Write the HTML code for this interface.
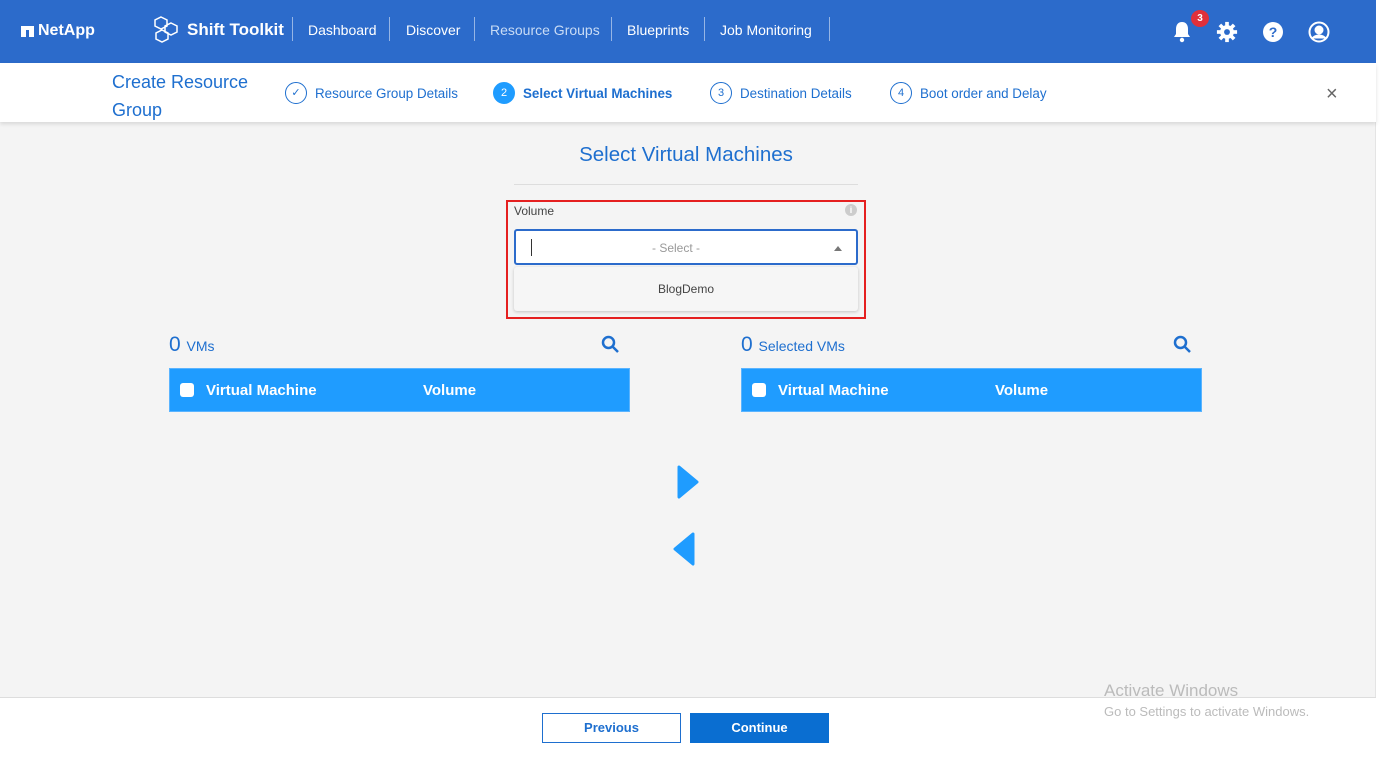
<!DOCTYPE html>
<html><head><style>
*{box-sizing:border-box;margin:0;padding:0}
body{width:1384px;height:760px;background:#fff;font-family:"Liberation Sans",sans-serif;position:relative;overflow:hidden}
.app{position:absolute;left:0;top:0;width:1376px;height:755px;background:#f4f4f4;border-right:1px solid #e4e4e4}
.hdr{position:absolute;left:0;top:0;width:1376px;height:63px;background:#2c6bcb;color:#fff}
.hdr .t{position:absolute;top:22px;font-size:14px}
.sep{position:absolute;top:17px;width:1px;height:24px;background:rgba(255,255,255,.5)}
.sub{position:absolute;left:0;top:63px;width:1376px;height:59px;background:#fff;box-shadow:0 2px 4px rgba(0,0,0,.12)}
.blue{color:#1e6fcf}
.step{position:absolute;top:23px;font-size:13.4px;color:#1e6fcf}
.circ{position:absolute;top:19px;width:22px;height:22px;border:1.3px solid #1e6fcf;border-radius:50%;font-size:11px;text-align:center;line-height:20px;color:#1e6fcf}
.tbl{position:absolute;top:368px;width:461px;height:44px;background:#1f9cff;color:#fff;font-weight:bold;font-size:15px;border:1px solid #5ab4ff}
.tbl span{position:absolute;top:13px}
.cb{position:absolute;left:10px;top:14px;width:14px;height:14px;background:#fff;border-radius:3px}
.foot{position:absolute;left:0;top:697px;width:1376px;height:58px;background:#fff;border-top:1px solid #ddd}
.btn{position:absolute;top:15px;width:139px;height:30px;font-size:13px;font-weight:bold;text-align:center;line-height:28px}
</style></head><body>
<div class="app">
<div class="hdr">
 <div style="position:absolute;left:21px;top:26px;width:13px;height:11px;background:#fff"></div>
 <div style="position:absolute;left:26px;top:30px;width:3px;height:7px;background:#2c6bcb"></div>
 <div class="t" style="left:38px;top:22px;font-weight:bold;font-size:16px">NetApp</div>
 <svg style="position:absolute;left:151px;top:14px" width="30" height="30" viewBox="0 0 30 30" fill="none" stroke="#fff" stroke-width="1.5"><path d="M10 3l6 3v6l-6 3-6-3V6z M20 9l6 3v6l-6 3-6-3v-6z M11 16l6 3v6l-6 3-6-3v-6z"/></svg>
 <div class="t" style="left:187px;top:20px;font-weight:bold;font-size:17px">Shift Toolkit</div>
 <div class="sep" style="left:292px"></div>
 <div class="t" style="left:308px">Dashboard</div>
 <div class="sep" style="left:389px"></div>
 <div class="t" style="left:406px">Discover</div>
 <div class="sep" style="left:474px"></div>
 <div class="t" style="left:490px;color:#c9dcf5">Resource Groups</div>
 <div class="sep" style="left:611px"></div>
 <div class="t" style="left:627px">Blueprints</div>
 <div class="sep" style="left:704px"></div>
 <div class="t" style="left:720px">Job Monitoring</div>
 <div class="sep" style="left:829px"></div>
 <svg style="position:absolute;left:1172px;top:21px" width="20" height="22" viewBox="0 0 20 22" fill="#fff"><path d="M10 1c-4 0-6 3-6 7v5l-2 3h16l-2-3V8c0-4-2-7-6-7z"/><circle cx="10" cy="19" r="2.2"/></svg>
 <div style="position:absolute;left:1191px;top:10px;width:18px;height:17px;border-radius:50%;background:#e0303b;color:#fff;font-size:10px;font-weight:bold;text-align:center;line-height:17px">3</div>
 <svg style="position:absolute;left:1216px;top:21px" width="22" height="22" viewBox="0 0 24 24"><g fill="#fff"><circle cx="12" cy="12" r="7.5"/><rect x="10" y="1" width="4" height="5"/><rect x="10" y="18" width="4" height="5"/><rect x="1" y="10" width="5" height="4"/><rect x="18" y="10" width="5" height="4"/><rect x="10" y="1" width="4" height="5" transform="rotate(45 12 12)"/><rect x="10" y="18" width="4" height="5" transform="rotate(45 12 12)"/><rect x="1" y="10" width="5" height="4" transform="rotate(45 12 12)"/><rect x="18" y="10" width="5" height="4" transform="rotate(45 12 12)"/></g><circle cx="12" cy="12" r="3.2" fill="#2c6bcb"/></svg>
 <div style="position:absolute;left:1263px;top:22px;width:20px;height:20px;border-radius:50%;background:#fff;color:#2c6bcb;font-weight:bold;font-size:14px;text-align:center;line-height:20px">?</div>
 <svg style="position:absolute;left:1308px;top:21px" width="22" height="22" viewBox="0 0 22 22" fill="none" stroke="#fff" stroke-width="2"><circle cx="11" cy="11" r="9.5"/><circle cx="11" cy="9" r="3.5" fill="#fff"/><path d="M4.5 17.5c3-4 10-4 13 0" fill="#fff"/></svg>
</div>
<div class="sub">
 <div class="blue" style="position:absolute;left:112px;top:5px;font-size:18px;line-height:28px">Create Resource<br>Group</div>
 <div class="circ" style="left:285px">✓</div><div class="step" style="left:315px">Resource Group Details</div>
 <div class="circ" style="left:493px;background:#1f9cff;border-color:#1f9cff;color:#fff">2</div><div class="step" style="left:523px;font-weight:bold">Select Virtual Machines</div>
 <div class="circ" style="left:710px">3</div><div class="step" style="left:740px">Destination Details</div>
 <div class="circ" style="left:890px">4</div><div class="step" style="left:920px">Boot order and Delay</div>
 <div style="position:absolute;left:1326px;top:20px;font-size:20px;color:#666">×</div>
</div>
<div class="blue" style="position:absolute;left:0;width:1372px;text-align:center;top:143px;font-size:20.5px">Select Virtual Machines</div>
<div style="position:absolute;left:514px;top:184px;width:344px;height:1px;background:#ddd"></div>
<div style="position:absolute;left:506px;top:200px;width:360px;height:119px;border:2px solid #e52020"></div>
<div style="position:absolute;left:514px;top:204px;font-size:12px;color:#444">Volume</div>
<div style="position:absolute;left:845px;top:204px;width:12px;height:12px;border-radius:50%;background:#ccc;color:#fff;font-size:9px;text-align:center;line-height:12px;font-weight:bold">i</div>
<div style="position:absolute;left:514px;top:229px;width:344px;height:36px;background:#fff;border:2px solid #2c6bcb;border-radius:3px">
 <div style="position:absolute;left:15px;top:8px;width:1px;height:17px;background:#333"></div>
 <div style="position:absolute;left:0;width:320px;text-align:center;top:10px;font-size:12px;color:#999">- Select -</div>
 <div style="position:absolute;left:318px;top:15px;width:0;height:0;border-left:4px solid transparent;border-right:4px solid transparent;border-bottom:5px solid #777"></div>
</div>
<div style="position:absolute;left:514px;top:267px;width:344px;height:44px;background:#f6f6f6;box-shadow:0 1px 3px rgba(0,0,0,.2);border-radius:3px;text-align:center;line-height:44px;font-size:12px;color:#444">BlogDemo</div>
<div class="blue" style="position:absolute;left:169px;top:333px;font-size:21px">0 <span style="font-size:14px">VMs</span></div>
<div class="blue" style="position:absolute;left:741px;top:333px;font-size:21px">0 <span style="font-size:14px">Selected VMs</span></div>
<svg style="position:absolute;left:601px;top:335px" width="19" height="19" viewBox="0 0 19 19" fill="none" stroke="#1e6fcf" stroke-width="2.5"><circle cx="7.5" cy="7.5" r="5.5"/><path d="M11.5 11.5l5.5 5.5"/></svg>
<svg style="position:absolute;left:1173px;top:335px" width="19" height="19" viewBox="0 0 19 19" fill="none" stroke="#1e6fcf" stroke-width="2.5"><circle cx="7.5" cy="7.5" r="5.5"/><path d="M11.5 11.5l5.5 5.5"/></svg>
<div class="tbl" style="left:169px"><div class="cb"></div><span style="left:36px">Virtual Machine</span><span style="left:253px">Volume</span></div>
<div class="tbl" style="left:741px"><div class="cb"></div><span style="left:36px">Virtual Machine</span><span style="left:253px">Volume</span></div>
<svg style="position:absolute;left:676px;top:464px" width="24" height="36" viewBox="0 0 24 36"><path d="M3 3l18 15L3 33z" fill="#1f9cff" stroke="#1f9cff" stroke-width="3" stroke-linejoin="round"/></svg>
<svg style="position:absolute;left:672px;top:531px" width="24" height="36" viewBox="0 0 24 36"><path d="M21 3L3 18l18 15z" fill="#1f9cff" stroke="#1f9cff" stroke-width="3" stroke-linejoin="round"/></svg>
<div class="foot">
 <div class="btn" style="left:542px;background:#fff;border:1px solid #1e6fcf;color:#1e6fcf">Previous</div>
 <div class="btn" style="left:690px;background:#0a6ed1;color:#fff;line-height:30px">Continue</div>
</div>
<div style="position:absolute;left:1104px;top:681px;font-size:17px;color:#bbb">Activate Windows</div>
<div style="position:absolute;left:1104px;top:704px;font-size:13px;color:#bbb">Go to Settings to activate Windows.</div>
</div>
</body></html>
